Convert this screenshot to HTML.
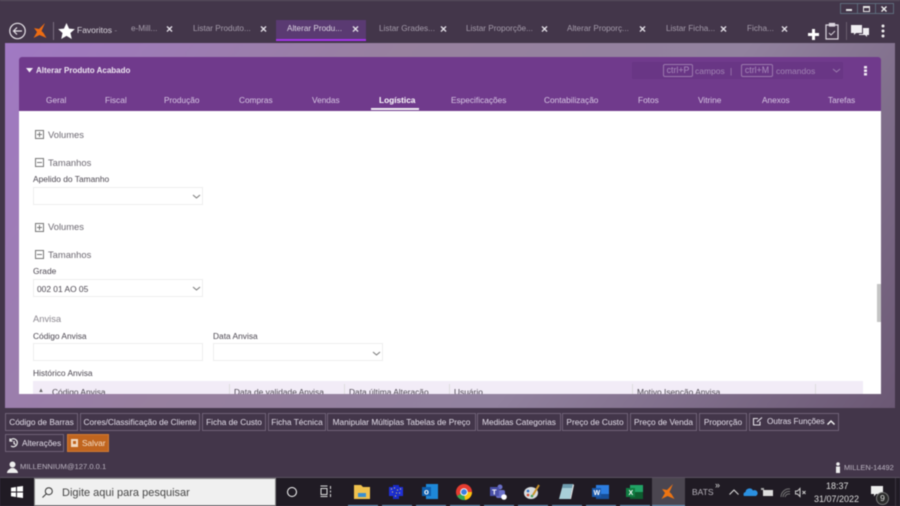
<!DOCTYPE html>
<html><head><meta charset="utf-8"><style>
html,body{margin:0;padding:0;width:900px;height:506px;overflow:hidden;background:#43364a}
body{font-family:"Liberation Sans",sans-serif;position:relative}
#r{position:absolute;left:0;top:0;width:900px;height:506px;filter:blur(.45px)}
.a,.t{position:absolute;white-space:nowrap}
.t{font-size:8.2px;line-height:12px}
.w{color:#cfc6d6}
.h{color:#d8c8e4;font-size:8.3px}
.g{color:#6c6871;font-size:9.4px}
.l{color:#4b4650;font-size:8.4px}
.b{position:absolute;top:413px;height:16px;line-height:16px;border:1px solid #6f6278;color:#e4deea;font-size:8.3px;text-align:center;white-space:nowrap;overflow:hidden}
.f{position:absolute;background:#fff;border:1px solid #eeeeee;box-sizing:border-box;height:18px}
svg{position:absolute;overflow:visible}
.x{color:#e4e0e8;font-size:12px;font-weight:bold}
</style></head><body><div id="r">
<div class="a" style="left:5px;top:43px;width:890px;height:365px;background:linear-gradient(125deg,#a179c4 0%,#98819f 35%,#92829f 65%,#6b5874 100%)"></div>
<div class="a" style="left:0;top:0;width:900px;height:1px;background:#5a5060"></div>

<!-- top bar -->
<svg style="left:9px;top:22px" width="18" height="18" viewBox="0 0 18 18" fill="none" stroke="#e8e4ea" stroke-width="1.2"><circle cx="8.5" cy="9" r="7.7"/><path d="M13 9H4.500M8 5.500L4.500 9 8 12.500"/></svg>
<svg style="left:33px;top:23px" width="15" height="16" viewBox="0 0 15 16" fill="#ee6c12"><path d="M12 0L6 6 1 5l3 4-3.500 6 6-3 7 3-3-5-2-2z"/></svg>
<div class="a" style="left:53px;top:22px;width:1px;height:18px;background:#7a6e80"></div>
<svg style="left:58px;top:23px" width="17" height="16" viewBox="0 0 24 23" fill="#fff"><path d="M12 0l3.700 8 8.300 .8-6.300 5.600 1.900 8.600-7.600-4.500-7.600 4.500 1.900-8.600L0 8.800 8.300 8z"/></svg>
<span class="t" style="left:77px;top:24px;color:#ddd8e0;font-size:8.500px">Favoritos <span style="color:#8c8292">-</span></span>
<div class="a" style="left:276px;top:20px;width:90px;height:19px;background:#5a3a72"></div>
<div class="a" style="left:276px;top:39px;width:90px;height:2px;background:#a334e8"></div>
<span class="t" style="left:131px;top:23px;color:#a59cab">e-Mill...</span>
<span class="t x" style="left:166px;top:23px">×</span>
<span class="t" style="left:193px;top:23px;color:#a59cab">Listar Produto...</span>
<span class="t x" style="left:260px;top:23px">×</span>
<span class="t" style="left:287px;top:23px;color:#ddd6e2">Alterar Produ...</span>
<span class="t x" style="left:352px;top:23px">×</span>
<span class="t" style="left:379px;top:23px;color:#a59cab">Listar Grades...</span>
<span class="t x" style="left:440px;top:23px">×</span>
<span class="t" style="left:466px;top:23px;color:#a59cab">Listar Proporçõe...</span>
<span class="t x" style="left:541px;top:23px">×</span>
<span class="t" style="left:567px;top:23px;color:#a59cab">Alterar Proporç...</span>
<span class="t x" style="left:639px;top:23px">×</span>
<span class="t" style="left:666px;top:23px;color:#a59cab">Listar Ficha...</span>
<span class="t x" style="left:720px;top:23px">×</span>
<span class="t" style="left:747px;top:23px;color:#a59cab">Ficha...</span>
<span class="t x" style="left:781px;top:23px">×</span>
<svg style="left:808px;top:29px" width="11" height="11" viewBox="0 0 11 11" fill="#fff"><path d="M4 0h3v4h4v3H7v4H4V7H0V4h4z"/></svg>
<svg style="left:825px;top:22px" width="15" height="18" viewBox="0 0 15 18" fill="none" stroke="#dcd6e0" stroke-width="1.200"><path d="M4.500 3H1v14h12V3H9.500"/><path d="M4.500 1.500h5V4h-5z" fill="#dcd6e0"/><path d="M4 11l2 2 4-4" stroke-width=".9"/></svg>
<div class="a" style="left:846px;top:22px;width:1px;height:18px;background:#6a5e70"></div>
<svg style="left:851px;top:25px" width="18" height="13" viewBox="0 0 18 13" fill="#f0eef2"><path d="M0 0h11v8H5l-2 2V8H0z"/><path d="M12 3h6v7h-2v2l-2-2H8V9h4z"/></svg>
<svg style="left:881px;top:24px" width="4" height="14" fill="#eee"><circle cx="2" cy="2" r="1.500"/><circle cx="2" cy="7" r="1.500"/><circle cx="2" cy="12" r="1.500"/></svg>
<!-- window controls -->
<div class="a" style="left:840px;top:3px;width:52px;height:9px;border:1px solid #5d6b7c"></div>
<div class="a" style="left:857px;top:3px;width:1px;height:10px;background:#5d6b7c"></div>
<div class="a" style="left:875px;top:3px;width:1px;height:10px;background:#5d6b7c"></div>
<div class="a" style="left:846px;top:9px;width:6px;height:2px;background:#e8e8e8"></div>
<div class="a" style="left:863px;top:6px;width:5px;height:3px;border:1px solid #e8e8e8;border-top-width:2px"></div>
<svg style="left:881px;top:6px" width="6" height="6" fill="none" stroke="#eee" stroke-width="1.400"><path d="M.5 .5l5 5M5.500 .5l-5 5"/></svg>

<!-- card -->
<div class="a" style="left:19px;top:57px;width:862px;height:54px;background:#703a8c;border-radius:3px 3px 0 0"></div>
<div class="a" style="left:19px;top:111px;width:862px;height:283px;background:#fff;overflow:hidden">
  <div class="a" style="left:14px;top:270px;width:830px;height:20px;background:#f2ecf7"></div>
  <div class="a" style="top:173px;width:4px;height:38px;background:#c4c4c4;left:858px"></div>
  <span class="t l" style="left:14px;top:256px">Histórico Anvisa</span>
  <span class="t l" style="left:33px;top:275px">Código Anvisa</span>
  <span class="t" style="left:19px;top:274px;font-size:6px;color:#666">▲</span>
  <div class="a" style="left:210px;top:273px;width:1px;height:17px;background:#ddd"></div>
  <span class="t l" style="left:215px;top:275px">Data de validade Anvisa</span>
  <div class="a" style="left:325px;top:273px;width:1px;height:17px;background:#ddd"></div>
  <span class="t l" style="left:330px;top:275px">Data última Alteração</span>
  <div class="a" style="left:430px;top:273px;width:1px;height:17px;background:#ddd"></div>
  <span class="t l" style="left:435px;top:275px">Usuário</span>
  <div class="a" style="left:613px;top:273px;width:1px;height:17px;background:#ddd"></div>
  <span class="t l" style="left:618px;top:275px">Motivo Isenção Anvisa</span>
  <div class="a" style="left:796px;top:273px;width:1px;height:17px;background:#ddd"></div>
</div>
<svg style="left:26px;top:68px" width="7" height="5"><path d="M0 0h7L3.500 4.500z" fill="#f2eef5"/></svg>
<span class="t" style="left:36px;top:65px;color:#eee6f2;font-weight:bold;font-size:8px">Alterar Produto Acabado</span>
<div class="a" style="left:632px;top:62px;width:211px;height:17px;background:#693685"></div>
<div class="a" style="left:663px;top:64px;width:28px;height:11px;border:1px solid #9a78ad;border-radius:2px;color:#a98bbb;font-size:8.800px;line-height:11px;text-align:center">ctrl+P</div>
<span class="t" style="left:695px;top:65px;color:#a184b3;font-size:8.500px">campos</span>
<span class="t" style="left:730px;top:65px;color:#a184b3;font-size:8.500px">|</span>
<div class="a" style="left:741px;top:64px;width:30px;height:11px;border:1px solid #9a78ad;border-radius:2px;color:#a98bbb;font-size:8.800px;line-height:11px;text-align:center">ctrl+M</div>
<span class="t" style="left:776px;top:65px;color:#a184b3;font-size:8.500px">comandos</span>
<svg style="left:833px;top:69px" width="7" height="4" fill="none" stroke="#9b7cae"><path d="M0 0l3.500 3L7 0"/></svg>
<svg style="left:864px;top:66px" width="3" height="10" fill="#f0eaf4"><rect width="3" height="2.500"/><rect y="3.500" width="3" height="2.500"/><rect y="7" width="3" height="2.500"/></svg>
<span class="t h" style="left:46px;top:94px">Geral</span>
<span class="t h" style="left:105px;top:94px">Fiscal</span>
<span class="t h" style="left:164px;top:94px">Produção</span>
<span class="t h" style="left:239px;top:94px">Compras</span>
<span class="t h" style="left:312px;top:94px">Vendas</span>
<span class="t" style="left:379px;top:94px;color:#fff;font-weight:bold;font-size:8.300px">Logística</span>
<div class="a" style="left:371px;top:108px;width:48px;height:2px;background:#f2eef5"></div>
<span class="t h" style="left:451px;top:94px">Especificações</span>
<span class="t h" style="left:544px;top:94px">Contabilização</span>
<span class="t h" style="left:638px;top:94px">Fotos</span>
<span class="t h" style="left:698px;top:94px">Vitrine</span>
<span class="t h" style="left:762px;top:94px">Anexos</span>
<span class="t h" style="left:828px;top:94px">Tarefas</span>

<!-- form -->
<svg style="left:35px;top:130px" width="9" height="9" fill="none" stroke="#777"><rect x=".5" y=".5" width="8" height="8"/><path d="M2 4.500h5M4.500 2v5"/></svg>
<span class="t g" style="left:48px;top:129px">Volumes</span>
<svg style="left:35px;top:158px" width="9" height="9" fill="none" stroke="#777"><rect x=".5" y=".5" width="8" height="8"/><path d="M2 4.500h5"/></svg>
<span class="t g" style="left:48px;top:157px">Tamanhos</span>
<span class="t l" style="left:33px;top:173px">Apelido do Tamanho</span>
<div class="f" style="left:33px;top:187px;width:170px"></div>
<svg style="left:193px;top:195px" width="7" height="4" fill="none" stroke="#777"><path d="M0 0l3.500 3L7 0"/></svg>
<svg style="left:35px;top:223px" width="9" height="9" fill="none" stroke="#777"><rect x=".5" y=".5" width="8" height="8"/><path d="M2 4.500h5M4.500 2v5"/></svg>
<span class="t g" style="left:48px;top:221px">Volumes</span>
<svg style="left:35px;top:250px" width="9" height="9" fill="none" stroke="#777"><rect x=".5" y=".5" width="8" height="8"/><path d="M2 4.500h5"/></svg>
<span class="t g" style="left:48px;top:249px">Tamanhos</span>
<span class="t l" style="left:33px;top:265px">Grade</span>
<div class="f" style="left:33px;top:279px;width:170px"></div>
<span class="t l" style="left:37px;top:283px">002 01 AO 05</span>
<svg style="left:193px;top:287px" width="7" height="4" fill="none" stroke="#777"><path d="M0 0l3.500 3L7 0"/></svg>
<span class="t g" style="left:33px;top:313px;color:#8a868e">Anvisa</span>
<span class="t l" style="left:33px;top:330px">Código Anvisa</span>
<span class="t l" style="left:213px;top:330px">Data Anvisa</span>
<div class="f" style="left:33px;top:343px;width:170px"></div>
<div class="f" style="left:213px;top:343px;width:170px"></div>
<svg style="left:373px;top:352px" width="7" height="4" fill="none" stroke="#777"><path d="M0 0l3.500 3L7 0"/></svg>

<!-- buttons -->
<div class="b" style="left:5px;width:71px">Código de Barras</div>
<div class="b" style="left:80px;width:118px">Cores/Classificação de Cliente</div>
<div class="b" style="left:202px;width:62px">Ficha de Custo</div>
<div class="b" style="left:268px;width:56px">Ficha Técnica</div>
<div class="b" style="left:327px;width:147px">Manipular Múltiplas Tabelas de Preço</div>
<div class="b" style="left:477px;width:82px">Medidas Categorias</div>
<div class="b" style="left:562px;width:64px">Preço de Custo</div>
<div class="b" style="left:630px;width:65px">Preço de Venda</div>
<div class="b" style="left:699px;width:46px">Proporção</div>
<div class="b" style="left:749px;width:88px;text-align:left;text-indent:17px;font-size:8.200px;letter-spacing:-.05px">Outras Funções</div>
<svg style="left:753px;top:417px" width="10" height="9" fill="none" stroke="#e4e0e8" stroke-width="1.100"><path d="M7 4.500V8H.5V1.500H5M4 5l5-4.500"/></svg>
<svg style="left:827px;top:420px" width="8" height="5" fill="none" stroke="#f0f0f0" stroke-width="1.500"><path d="M.5 4.500L4 1l3.500 3.500"/></svg>
<div class="b" style="left:5px;top:434px;width:57px;text-align:left;text-indent:16px">Alterações</div>
<svg style="left:9px;top:438px" width="10" height="10" fill="none" stroke="#eee" stroke-width="1.200"><path d="M1 2.500A4 4 0 1 1 2 8M1 .5v2.500h2.500M5 3v2.500l1.500 1"/></svg>
<div class="b" style="left:67px;top:434px;width:40px;background:#c0651f;border-color:#d27a35;color:#f5dfc8;text-align:left;text-indent:14px">Salvar</div>
<div class="a" style="left:71px;top:439px;width:7px;height:8px;background:#f0d8c0"></div>
<div class="a" style="left:73px;top:441px;width:3px;height:3px;background:#c0651f"></div>

<!-- status -->
<svg style="left:7px;top:461px" width="11" height="12" fill="#eee"><circle cx="5.500" cy="3.500" r="3"/><path d="M0 12c0-3 3-4 4-5h3c1 1 4 2 4 5z"/></svg>
<span class="t" style="left:20px;top:461px;color:#bcb5c2;font-size:7.600px">MILLENNIUM@127.0.0.1</span>
<svg style="left:835px;top:462px" width="6" height="11" fill="#eee"><circle cx="3" cy="2" r="1.800"/><rect x="1" y="4.500" width="4" height="6.500"/></svg>
<span class="t" style="left:844px;top:462px;color:#bcb5c2;font-size:7.400px">MILLEN-14492</span>

<!-- taskbar -->
<div class="a" style="left:0;top:477px;width:900px;height:1px;background:#5a5060"></div>
<div class="a" style="left:0;top:478px;width:900px;height:28px;background:#201b24"></div>
<svg style="left:11px;top:486px" width="12" height="12" fill="#fff"><path d="M0 1.800L5 1v4.500H0zM6 .8L12 0v5.500H6zM0 6.500h5V11l-5-.8zM6 6.500h6V12l-6-.8z"/></svg>
<div class="a" style="left:34px;top:478px;width:242px;height:28px;background:#f0f0f0;border:1px solid #8a8a8a;box-sizing:border-box"></div>
<svg style="left:42px;top:487px" width="11" height="11" fill="none" stroke="#333" stroke-width="1"><circle cx="6.800" cy="4.200" r="3.500"/><path d="M4.300 6.800L.5 10.500"/></svg>
<span class="t" style="left:62px;top:486px;color:#444;font-size:11px;line-height:14px">Digite aqui para pesquisar</span>
<div class="a" style="left:287px;top:487px;width:8px;height:8px;border:1.500px solid #fff;border-radius:50%"></div>
<svg style="left:320px;top:486px" width="12" height="11" fill="none" stroke="#ddd"><path d="M.5 0h7M.5 10.500h7M1 2.500h6v6H1zM10.500 0v3M10.500 4.500v2M10.500 8v3"/></svg>
<!-- app icons -->
<svg style="left:354px;top:485px" width="16" height="14"><path d="M0 0h7l2 2h7v12H0z" fill="#f0c24e"/><rect x="4" y="8" width="8" height="4" fill="#3a8fd0"/></svg>
<svg style="left:388px;top:485px" width="16" height="14"><rect x="1" y="2" width="14" height="9" fill="#2030d8"/><rect x="5" y="0" width="6" height="14" fill="#1a2cc8"/><path d="M3 4h1M6 3h1M9 5h1M12 4h1M4 7h1M8 8h1M11 8h1M7 11h1" stroke="#f2e05a"/></svg>
<svg style="left:422px;top:484px" width="16" height="15"><rect x="4" y="0" width="12" height="15" fill="#1e88d8"/><rect x="0" y="3" width="9" height="9" fill="#0f5fae"/><text x="2" y="10.500" font-size="8" font-weight="bold" fill="#fff" font-family="Liberation Sans">o</text></svg>
<svg style="left:456px;top:484px" width="16" height="16"><circle cx="8" cy="8" r="8" fill="#e53c30"/><path d="M8 8L1 12A8 8 0 0 0 11 15.500z" fill="#34a853"/><path d="M8 8h8A8 8 0 0 1 9 16z" fill="#fbc40e"/><circle cx="8" cy="8" r="3.800" fill="#fff"/><circle cx="8" cy="8" r="2.900" fill="#3b7de0"/></svg>
<svg style="left:490px;top:484px" width="17" height="16"><circle cx="10" cy="3" r="2.500" fill="#6a70c8"/><rect x="6" y="6" width="9" height="8" rx="2" fill="#6a70c8"/><rect x="0" y="3" width="9" height="9" fill="#4a50a8"/><text x="2" y="10.500" font-size="7.500" font-weight="bold" fill="#fff" font-family="Liberation Sans">T</text><circle cx="14" cy="13" r="2.800" fill="#fff"/></svg>
<svg style="left:524px;top:484px" width="16" height="16"><ellipse cx="7" cy="9" rx="7" ry="6" fill="#d8dde0"/><circle cx="4" cy="7" r="1.300" fill="#2a6ac0"/><circle cx="4" cy="11" r="1.300" fill="#d84a30"/><circle cx="8" cy="12" r="1.300" fill="#48a050"/><path d="M9 11L15 1" stroke="#c8922a" stroke-width="2"/></svg>
<svg style="left:559px;top:484px" width="15" height="16"><path d="M4 0h10l-3 15H0z" fill="#a8cfd8"/><path d="M4 0h10l-1 4H3z" fill="#6e9cae"/><path d="M11 15l3-15 1 1-3 14z" fill="#eee"/></svg>
<svg style="left:592px;top:484px" width="17" height="16"><rect x="4" y="1" width="13" height="14" fill="#2d7de0"/><rect x="4" y="10" width="13" height="5" fill="#174f98"/><rect x="0" y="4" width="9" height="9" fill="#1a5aae"/><text x="1.500" y="11" font-size="7" font-weight="bold" fill="#fff" font-family="Liberation Sans">W</text></svg>
<svg style="left:626px;top:484px" width="17" height="16"><rect x="4" y="1" width="13" height="14" fill="#21a366"/><rect x="4" y="8" width="13" height="7" fill="#0e5c2f"/><rect x="0" y="4" width="9" height="9" fill="#107c41"/><text x="2.500" y="11" font-size="7" font-weight="bold" fill="#fff" font-family="Liberation Sans">X</text></svg>
<div class="a" style="left:652px;top:478px;width:33px;height:28px;background:#4b4650"></div>
<svg style="left:661px;top:484px" width="15" height="16" viewBox="0 0 15 16" fill="#ee7412"><path d="M12 0L6 6 1 5l3 4-3.500 6 6-3 7 3-3-5-2-2z"/></svg>
<!-- running underlines -->
<div class="a" style="left:348px;top:505px;width:30px;height:1px;background:#6fa8d0"></div>
<div class="a" style="left:382px;top:505px;width:30px;height:1px;background:#6fa8d0"></div>
<div class="a" style="left:416px;top:505px;width:30px;height:1px;background:#6fa8d0"></div>
<div class="a" style="left:450px;top:505px;width:30px;height:1px;background:#6fa8d0"></div>
<div class="a" style="left:484px;top:505px;width:30px;height:1px;background:#6fa8d0"></div>
<div class="a" style="left:518px;top:505px;width:30px;height:1px;background:#6fa8d0"></div>
<div class="a" style="left:552px;top:505px;width:30px;height:1px;background:#6fa8d0"></div>
<div class="a" style="left:586px;top:505px;width:30px;height:1px;background:#6fa8d0"></div>
<div class="a" style="left:620px;top:505px;width:30px;height:1px;background:#6fa8d0"></div>
<div class="a" style="left:652px;top:505px;width:33px;height:1px;background:#6fa8d0"></div>
<!-- tray -->
<span class="t" style="left:692px;top:486px;color:#b8b4bc;font-size:8.500px">BATS</span>
<span class="t" style="left:715px;top:479px;color:#ddd;font-size:9px">»</span>
<svg style="left:729px;top:489px" width="10" height="6" fill="none" stroke="#ddd"><path d="M.5 5.500L5 1l4.500 4.500"/></svg>
<svg style="left:744px;top:488px" width="12" height="8" fill="#2b90e0"><path d="M0 8a2.500 2.500 0 0 1 1.500-4A4 4 0 0 1 9 2.500 3 3 0 0 1 12 8z"/></svg>
<svg style="left:761px;top:488px" width="12" height="8"><rect x="2" y="2" width="10" height="6" fill="#ddd"/><rect x="0" y="0" width="3" height="2" fill="#aaa"/></svg>
<svg style="left:780px;top:488px" width="11" height="10" fill="none" stroke="#777"><path d="M1 9A8 8 0 0 1 10 1M3 9A6 6 0 0 1 10 3.500M5 9A4 4 0 0 1 10 6"/></svg>
<svg style="left:795px;top:488px" width="11" height="9" fill="none" stroke="#ccc"><path d="M.5 3h2L5 .5v8L2.500 6h-2zM7.500 3l3 3M10.500 3l-3 3"/></svg>
<span class="t" style="left:826px;top:480px;color:#ddd;font-size:9px;line-height:12px">18:37</span>
<span class="t" style="left:814px;top:493px;color:#ddd;font-size:9px;line-height:12px">31/07/2022</span>
<svg style="left:871px;top:486px" width="12" height="11" fill="#eee"><path d="M0 0h12v8H5L3 10.500V8H0z"/></svg>
<div class="a" style="left:876px;top:492px;width:11px;height:11px;border-radius:50%;background:#2a2a2a;border:1px solid #777;color:#ddd;font-size:8.500px;line-height:11px;text-align:center">9</div>
<div class="a" style="left:895px;top:478px;width:1px;height:28px;background:#3a3540"></div>
</div></body></html>
